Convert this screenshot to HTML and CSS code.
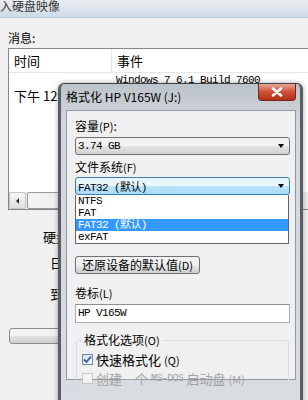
FILE: index.html
```html
<!DOCTYPE html>
<html lang="zh-CN">
<head>
  <meta charset="UTF-8" />
  <meta name="viewport" content="width=device-width, initial-scale=1.0" />
  <title>格式化 HP V165W (J:)</title>
  <link rel="stylesheet" href="styles.css">
</head>
<body>
  <div class="window">
    <div class="window-title">导入硬盘映像</div>
    <div class="window-body">
      <div class="caption">消息:</div>
      <div class="listview">
        <div class="lv-head">
          <div class="col-time">时间</div>
          <div class="col-event">事件</div>
        </div>
        <div class="lv-rows">
          <div class="lv-row">
            <span class="col-time"></span>
            <span class="col-event mono">Windows 7 6.1 Build 7600</span>
          </div>
          <div class="lv-row">
            <span class="col-time">下午 12:03:26</span>
            <span class="col-event mono">Format started</span>
          </div>
        </div>
        <div class="hscroll">
          <div class="sb-arrow"><span class="tri-left"></span></div>
          <div class="sb-thumb"></div>
        </div>
      </div>
      <div class="field f1">硬盘映像文件:</div>
      <div class="field f2">日期:</div>
      <div class="field f3">到:</div>
      <div class="bg-btn"></div>
    </div>
  </div>

  <div class="dialog">
    <div class="dlg-title">
      格式化 HP V165W (J:)
      <div class="close">
        <svg width="14" height="10" viewBox="0 0 14 10"><path d="M3 1.5 L11 8.5 M11 1.5 L3 8.5" stroke="#fff" stroke-width="2.6" stroke-linecap="round"/></svg>
      </div>
    </div>
    <div class="client">
      <div class="label">容量<span class="acc">(P)</span>:</div>
      <div class="combo">
        <span class="mono">3.74 GB</span>
        <span class="arrow"></span>
      </div>

      <div class="label l2">文件系统<span class="acc">(F)</span></div>
      <div class="combo focused">
        <span class="mono">FAT32 (默认)</span>
        <span class="arrow"></span>
      </div>
      <div class="droplist mono">
        <div class="item">NTFS</div>
        <div class="item">FAT</div>
        <div class="item selected">FAT32 (默认)</div>
        <div class="item">exFAT</div>
      </div>

      <div class="btn">还原设备的默认值<span class="acc">(D)</span></div>

      <div class="label l3">卷标<span class="acc">(L)</span></div>
      <div class="textbox mono">HP V165W</div>

      <fieldset class="group">
        <legend>格式化选项<span class="acc">(O)</span></legend>
        <div class="check">
          <span class="box checked">
            <svg width="9" height="9" viewBox="0 0 9 9"><path d="M1 4.5 L3.5 7 L8 1.5" fill="none" stroke="#3b5a9a" stroke-width="1.8"/></svg>
          </span>
          快速格式化<span class="acc">(Q)</span>
        </div>
        <div class="check disabled">
          <span class="box"></span>
          创建一个 <span class="mono small">MS-DOS</span> 启动盘<span class="acc">(M)</span>
        </div>
      </fieldset>
    </div>
  </div>
</body>
</html>
```

FILE: styles.css
```css
body { margin: 0; width: 308px; height: 400px; overflow: hidden; position: relative; background: #f0f0f0; font-family: "Noto Sans CJK SC", sans-serif; font-size: 12px; color: #000; }
.mono { font-family: "Liberation Mono", "Noto Sans CJK SC", monospace; font-size: 11px; letter-spacing: -0.6px; }
.acc { font-size: 11px; }

/* background window */
.window-title { height: 17px; border-bottom: 1px solid #b9c9da; background: linear-gradient(#e9edf1, #d0dbe7); text-indent: -12px; line-height: 12px; color: #3a3a3a; white-space: nowrap; overflow: hidden; }
.window-body { padding: 13px 0 0 8px; }
.caption { line-height: 14px; }
.listview { margin-top: 3px; height: 162px; box-sizing: border-box; border: 1px solid #828790; border-right: none; background: #fff; display: flex; flex-direction: column; }
.lv-head { height: 23px; border-bottom: 1px solid #e5e5e5; display: flex; align-items: center; font-size: 13px; }
.lv-head .col-time { border-right: 1px solid #e5e5e5; height: 23px; line-height: 23px; }
.col-time { width: 97px; padding-left: 5px; flex: none; white-space: nowrap; overflow: hidden; font-size: 13px; }
.col-event { padding-left: 5px; white-space: nowrap; }
.lv-rows { flex: 1; }
.lv-row { height: 15px; line-height: 15px; display: flex; }
.hscroll { height: 17px; background: #ebebeb; display: flex; gap: 1px; padding-left: 0; }
.sb-arrow { width: 17px; box-sizing: border-box; border: 1px solid #c5c5c5; border-radius: 2px; background: linear-gradient(#f7f7f7, #e0e0e0); display: flex; align-items: center; justify-content: center; }
.tri-left { border-top: 3px solid transparent; border-bottom: 3px solid transparent; border-right: 3px solid #333; }
.sb-thumb { width: 180px; box-sizing: border-box; border: 1px solid #9a9a9a; border-radius: 2px; background: linear-gradient(90deg, #f3f3f3, #dedede); }
.field { font-size: 13px; line-height: 14px; white-space: nowrap; }
.f1 { margin: 20px 0 0 35px; }
.f2 { margin: 12px 0 0 42px; }
.f3 { margin: 17px 0 0 42px; }
.bg-btn { margin: 27px 0 0 1px; width: 100px; height: 16px; box-sizing: border-box; border: 1px solid #8c8c8c; border-radius: 3px; background: linear-gradient(#f2f2f2 50%, #e2e2e2 50%, #cfcfcf); }

/* format dialog */
.dialog { position: absolute; left: 58px; top: 83px; width: 245px; height: 330px; box-sizing: border-box; border: 1px solid #3f4347; border-left-width: 3px; border-right-width: 3px; border-left-color: #5a5d61; border-right-color: #5a5d61; border-radius: 6px 6px 0 0; background: linear-gradient(#bcc3ca, #d3d8dd 40px, #d9dce0); padding: 0 4px 0 5px; box-shadow: 0 0 5px rgba(0,0,0,.35); }
.dlg-title { height: 26px; line-height: 26px; position: relative; white-space: nowrap; }
.close { position: absolute; top: 0; right: 0; width: 38px; height: 17px; box-sizing: border-box; border: 1px solid #6d2a1c; border-top: none; border-radius: 0 0 4px 4px; background: linear-gradient(#e8a996, #cf4f37 50%, #b73018); display: flex; align-items: center; justify-content: center; }
.client { height: 260px; border: 1px solid #8e99a5; background: #f0f0f0; padding: 8px 5px 0 8px; }
.label { line-height: 14px; }
.l2 { margin-top: 5px; }
.l3 { margin-top: 12px; }
.combo { margin-top: 4px; height: 18px; box-sizing: border-box; border: 1px solid #707070; border-radius: 3px; background: linear-gradient(#f2f2f2 50%, #e5e5e5 50%, #d2d2d2); display: flex; align-items: center; padding-left: 2px; }
.combo.focused { margin-top: 3px; border-color: #3c7fb1; background: linear-gradient(#eaf6fd 50%, #bee6fd 50%, #a7d9f5); }
.arrow { margin-left: auto; margin-right: 5px; border-left: 3px solid transparent; border-right: 3px solid transparent; border-top: 4px solid #000; }
.droplist { margin-right: 1px; border: 1px solid #646464; border-top: none; background: #fff; }
.item { height: 12px; line-height: 12px; padding-left: 2px; }
.item.selected { background: #3399ff; color: #fff; }
.btn { margin-top: 12px; width: 125px; height: 18px; box-sizing: border-box; border: 1px solid #707070; border-radius: 3px; background: linear-gradient(#f2f2f2 50%, #ebebeb 50%, #cfcfcf); line-height: 16px; text-align: center; white-space: nowrap; }
.textbox { margin-top: 4px; height: 19px; box-sizing: border-box; border: 1px solid #abadb3; border-top-color: #8e8f8f; background: #fff; padding-left: 2px; line-height: 17px; }
.group { margin: 10px 1px 0 1px; border: 1px solid #d5dfe5; border-radius: 3px; padding: 3px 5px 0 5px; }
.group legend { padding: 0 2px; line-height: 14px; }
.check { height: 19px; display: flex; align-items: center; gap: 3px; font-size: 13px; white-space: nowrap; }
.box { width: 11px; height: 11px; box-sizing: border-box; border: 1px solid #8f8f8f; background: linear-gradient(135deg, #dcdcdc, #fbfbfb); display: flex; align-items: center; justify-content: center; }
.box.checked { border-color: #6d8bb6; }
.disabled { color: #a3a3a3; }
.disabled .box { border-color: #c8c8c8; background: #f4f4f4; }
.small { font-size: 10px; }
```
